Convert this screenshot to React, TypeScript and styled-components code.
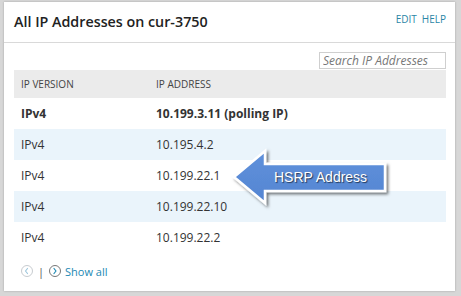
import styled, {createGlobalStyle} from "styled-components";

const GlobalStyle = createGlobalStyle`
    html, body {
        margin: 0;
        padding: 0;
        background: #d7d7d7;
        font-family: "Open Sans", "Liberation Sans", sans-serif;
    }
`;

const Page = styled.div`
    width: 461px;
    height: 296px;
    padding: 2px 6px 5px 4px;
    box-sizing: border-box;
`;

const Card = styled.div`
    position: relative;
    width: 451px;
    height: 289px;
    background: #fff;
    box-shadow: 0 0 2px rgba(0, 0, 0, 0.25);
    display: flex;
    flex-direction: column;
`;

const Header = styled.div`
    height: 40px;
    border-bottom: 1px solid #d9d9d9;
    display: flex;
    justify-content: space-between;
    align-items: flex-start;
    padding: 0 9px 0 10px;
`;

const Title = styled.h1`
    margin: 0;
    padding-top: 10px;
    font-size: 14.3px;
    font-weight: 600;
    color: #222;
    line-height: 20px;
`;

const HeaderLinks = styled.div`
    display: flex;
    gap: 5px;
    padding-top: 10px;
`;

const HeaderLink = styled.a`
    font-size: 10px;
    color: #2a86a6;
    text-decoration: none;
    line-height: 14px;
`;

const Body = styled.div`
    padding: 10px 9px 0 10px;
    display: flex;
    flex-direction: column;
`;

const SearchRow = styled.div`
    display: flex;
    justify-content: flex-end;
    margin-top: -1px;
    margin-bottom: 1px;
`;

const SearchInput = styled.input`
    width: 127px;
    height: 17px;
    box-sizing: border-box;
    border: 1px solid #cfcfcf;
    padding: 0 3px;
    font-family: "Open Sans", "Liberation Sans", sans-serif;
    font-size: 12px;
    outline: none;

    &::placeholder {
        color: #777;
        font-style: italic;
    }
`;

const Table = styled.div`
    display: flex;
    flex-direction: column;
`;

const Row = styled.div<{ $head?: boolean; $alt?: boolean; $bold?: boolean }>`
    display: grid;
    grid-template-columns: 135px 1fr;
    align-items: center;
    height: ${(p) => (p.$head ? 28 : 31)}px;
    padding-left: 7px;
    background: ${(p) => (p.$head ? "#ebebeb" : p.$alt ? "#eaf4fb" : "#fff")};
    font-size: ${(p) => (p.$head ? 10 : 12)}px;
    font-weight: ${(p) => (p.$bold ? 700 : 400)};
    color: ${(p) => (p.$head ? "#444" : "#333")};
    text-transform: ${(p) => (p.$head ? "uppercase" : "none")};
`;

const Pager = styled.div`
    display: flex;
    align-items: center;
    gap: 5px;
    padding: 6px 0 0 7px;
    height: 24px;
`;

const PagerCircle = styled.span<{ $disabled?: boolean }>`
    width: 10px;
    height: 10px;
    border-radius: 50%;
    border: 1px solid ${(p) => (p.$disabled ? "#c8ccd0" : "#777")};
    display: flex;
    align-items: center;
    justify-content: center;
`;

const Sep = styled.span`
    font-size: 11px;
    color: #555;
`;

const ShowAll = styled.a`
    font-size: 11px;
    color: #1b88b3;
    text-decoration: none;
    margin-left: -1px;
`;

const Callout = styled.svg`
    position: absolute;
    left: 222px;
    top: 141px;
    overflow: visible;
`;

const rows = [
    {version: "IPv4", address: "10.199.3.11 (polling IP)", bold: true},
    {version: "IPv4", address: "10.195.4.2"},
    {version: "IPv4", address: "10.199.22.1"},
    {version: "IPv4", address: "10.199.22.10"},
    {version: "IPv4", address: "10.199.22.2"},
];

function Chevron({dir, color}: { dir: "left" | "right"; color: string }) {
    const d = dir === "left" ? "M5.5 2.5 L3.5 5 L5.5 7.5" : "M4 2.5 L6 5 L4 7.5";
    return (
        <svg width="10" height="10" viewBox="0 0 10 10">
            <path d={d} fill="none" stroke={color} strokeWidth="1.2" strokeLinecap="round" strokeLinejoin="round"/>
        </svg>
    );
}

export default function App() {
    return <>
        <GlobalStyle/>
        <Page>
            <Card>
                <Header>
                    <Title>All IP Addresses on cur-3750</Title>
                    <HeaderLinks>
                        <HeaderLink>EDIT</HeaderLink>
                        <HeaderLink>HELP</HeaderLink>
                    </HeaderLinks>
                </Header>

                <Body>
                    <SearchRow>
                        <SearchInput placeholder="Search IP Addresses"/>
                    </SearchRow>

                    <Table>
                        <Row $head>
                            <span>IP Version</span>
                            <span>IP Address</span>
                        </Row>
                        {rows.map((r, i) => (
                            <Row key={i} $alt={i % 2 === 1} $bold={r.bold}>
                                <span>{r.version}</span>
                                <span>{r.address}</span>
                            </Row>
                        ))}
                    </Table>

                    <Pager>
                        <PagerCircle $disabled><Chevron dir="left" color="#9cc6dc"/></PagerCircle>
                        <Sep>|</Sep>
                        <PagerCircle><Chevron dir="right" color="#1b88b3"/></PagerCircle>
                        <ShowAll>Show all</ShowAll>
                    </Pager>
                </Body>

                {/* annotation arrow */}
                <Callout width="170" height="66" viewBox="0 0 170 66">
                    <defs>
                        <filter id="shadow" x="-10%" y="-20%" width="130%" height="150%">
                            <feDropShadow dx="2" dy="2" stdDeviation="1.5" floodColor="#000" floodOpacity="0.55"/>
                        </filter>
                        <linearGradient id="blue" x1="0" y1="0" x2="0" y2="1">
                            <stop offset="0" stopColor="#5f91db"/>
                            <stop offset="1" stopColor="#5585d2"/>
                        </linearGradient>
                    </defs>
                    <polygon
                        points="8,34 39,8 39,21 159,21 159,48 39,48 39,60"
                        fill="url(#blue)"
                        stroke="#fff"
                        strokeWidth="2.5"
                        strokeLinejoin="miter"
                        filter="url(#shadow)"
                    />
                    <text
                        x="48"
                        y="39"
                        fill="#fff"
                        fontFamily="'Liberation Sans', Arial, sans-serif"
                        fontSize="14"
                        style={{textShadow: "1px 1px 1px rgba(0,0,0,0.6)"}}
                    >HSRP Address</text>
                </Callout>
            </Card>
        </Page>
    </>
}
